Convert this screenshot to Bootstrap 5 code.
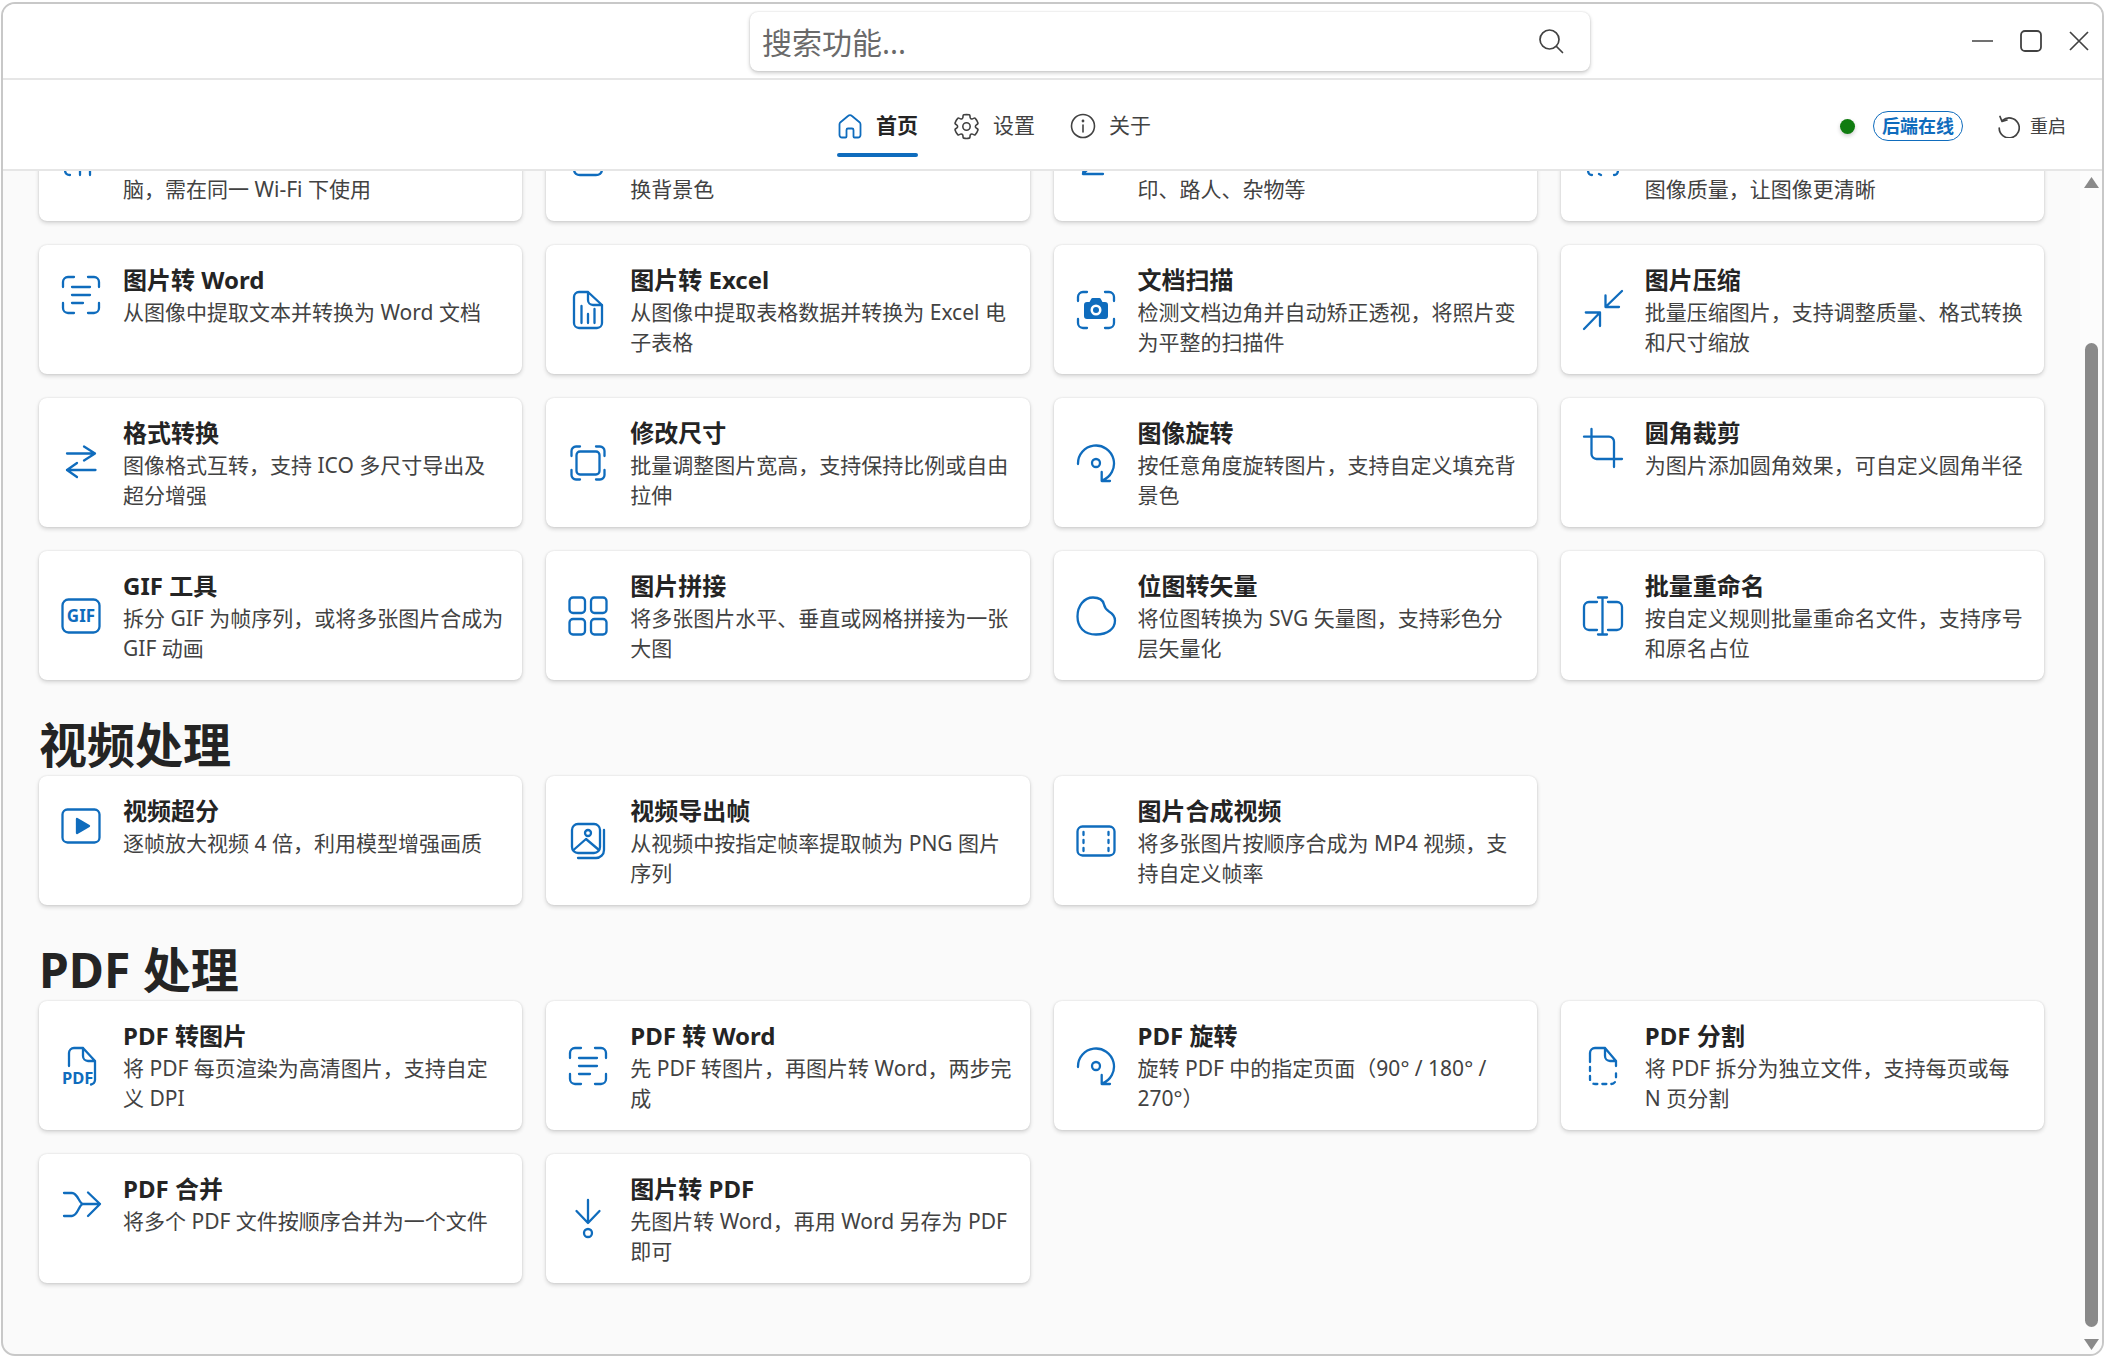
<!DOCTYPE html>
<html lang="zh-CN">
<head>
    <meta charset="UTF-8">
    <meta name="viewport" content="width=device-width, initial-scale=1.0">
    <title>工具箱</title>
    <link rel="stylesheet" href="https://cdn.jsdelivr.net/npm/bootstrap@5.3.0/dist/css/bootstrap.min.css">
    <style>
        html, body {
            height: 100%;
            overflow: hidden;
            background: #fff;
        }
        body {
            font-family: "Noto Sans", "Noto Sans CJK SC", sans-serif;
            color: #242424;
            padding: 2px 2px 1px 1px;
        }
        .app-window {
            height: 100%;
            border: 2px solid #c8c8c8;
            border-radius: 14px;
            overflow: hidden;
            background: #fafafa;
        }
        .title-strip {
            height: 76px;
            flex: none;
            background: #fff;
            border-bottom: 2px solid #e6e6e6;
        }
        .search-box {
            width: 840px;
            height: 59px;
            margin-left: 747px;
            padding: 0 26px 0 12px;
            border-radius: 8px;
            background: #fff;
            box-shadow: 0 2px 4px rgba(0, 0, 0, .2), 0 0 2px rgba(0, 0, 0, .14);
        }
        .search-box input {
            border: 0;
            outline: 0;
            padding: 2px 0 0;
            flex: 1;
            font-size: 30px;
            color: #242424;
            background: transparent;
            font-family: inherit;
        }
        .search-box input::placeholder {
            color: #6a6a6a;
            opacity: 1;
        }
        .win-btns {
            margin-left: auto;
            gap: 26px;
            padding-right: 12px;
            color: #424242;
        }
        .nav-strip {
            height: 91px;
            flex: none;
            padding-top: 3px;
            background: #fff;
            border-bottom: 2px solid #e6e6e6;
        }
        .tab-list {
            margin-left: 834px;
            gap: 35px;
        }
        .tab-item {
            position: relative;
            padding: 0;
            gap: 13px;
            height: 46px;
            font-size: 21px;
            color: #424242;
        }
        .tab-item:hover {
            color: #242424;
        }
        .tab-item.is-on {
            font-weight: 700;
            color: #242424;
        }
        .tab-item.is-on::after {
            content: "";
            position: absolute;
            left: 0;
            right: 0;
            bottom: -8px;
            height: 4px;
            border-radius: 2px;
            background: #0f6cbd;
        }
        .status-group {
            margin-left: auto;
            padding-right: 36px;
        }
        .status-dot {
            width: 15px;
            height: 15px;
            border-radius: 50%;
            background: #107c10;
            box-shadow: 0 2px 4px rgba(0, 0, 0, .2);
            margin-right: 18px;
        }
        .status-pill {
            width: 90px;
            height: 30px;
            border: 1px solid #0f6cbd;
            border-radius: 15px;
            background: #fff;
            color: #0f6cbd;
            font-size: 18px;
            font-weight: 700;
            line-height: 28px;
            padding: 0;
            margin-right: 35px;
        }
        .restart-btn {
            gap: 10px;
            font-size: 18px;
            color: #424242;
        }
        .tool-pane {
            position: relative;
            flex: 1;
            min-height: 0;
            overflow: hidden;
        }
        .tool-track {
            margin-top: -79px;
            padding: 0 58px 0 36px;
        }
        .sec-head {
            margin: 0;
            padding-top: 33px;
            font-size: 48px;
            font-weight: 700;
            line-height: 63px;
            color: #242424;
        }
        .tool-card {
            height: 129px;
            border: 0;
            border-radius: 8px;
            background: #fff;
            box-shadow: 0 2px 4px rgba(0, 0, 0, .16), 0 0 2px rgba(0, 0, 0, .12);
            padding: 18px 17px 0 22px;
        }
        .tool-row {
            gap: 22px;
        }
        .tool-ico {
            flex: none;
            width: 40px;
            height: 40px;
            overflow: visible;
            color: #0f6cbd;
            fill: none;
            stroke: currentColor;
            stroke-width: 2.3;
            stroke-linecap: round;
            stroke-linejoin: round;
        }
        .ico-label {
            fill: currentColor;
            stroke: none;
            font-family: "Noto Sans", sans-serif;
            font-weight: 700;
        }
        .tool-name {
            font-size: 24px;
            font-weight: 700;
            line-height: 34px;
            color: #242424;
        }
        .tool-desc {
            font-size: 21px;
            line-height: 30px;
            color: #424242;
        }
        .tool-desc.tail-only {
            padding-top: 64px;
        }
        .scroll-rail {
            position: absolute;
            top: 0;
            right: 0;
            bottom: 0;
            width: 22px;
            background: #fcfcfc;
            padding: 6px 3px 4px 4px;
            color: #8a8a8a;
        }
        .scroll-thumb {
            width: 13px;
            height: 984px;
            margin: 155px auto 0;
            border-radius: 7px;
            background: #8a8a8a;
        }
    </style>
</head>
<body>
    <svg width="0" height="0" class="position-absolute">
        <defs>
            <symbol id="i-scan" viewBox="0 0 40 40"><path d="M13 2H7a5 5 0 0 0-5 5v5M27 2h6a5 5 0 0 1 5 5v5M13 38H7a5 5 0 0 1-5-5v-5M27 38h6a5 5 0 0 0 5-5v-5M11 12h18M11 20h18M11 28h11"/></symbol>
            <symbol id="i-rotate" viewBox="0 0 40 40"><path d="M2 21A18 18 0 1 1 26 37.5M25.7 29v9H34"/><circle cx="20" cy="20" r="4"/></symbol>
        </defs>
    </svg>

    <div class="app-window d-flex flex-column">
        <div class="title-strip d-flex align-items-center">
            <div class="search-box d-flex align-items-center">
                <input type="text" placeholder="搜索功能...">
                <svg width="26" height="26" viewBox="0 0 26 26" fill="none" stroke="#424242" stroke-width="1.7" stroke-linecap="round"><circle cx="11.5" cy="11.5" r="9.5"/><path d="M18.5 18.5l6 6"/></svg>
            </div>
            <div class="win-btns d-flex align-items-center">
                <svg width="22" height="22" viewBox="0 0 22 22" fill="none" stroke="currentColor" stroke-width="1.7"><path d="M0 11h21"/></svg>
                <svg width="22" height="22" viewBox="0 0 22 22" fill="none" stroke="currentColor" stroke-width="1.8"><rect x="1" y="1" width="20" height="20" rx="4"/></svg>
                <svg width="22" height="22" viewBox="0 0 22 22" fill="none" stroke="currentColor" stroke-width="1.7"><path d="M2 2l18 18M20 2L2 20"/></svg>
            </div>
        </div>

        <div class="nav-strip d-flex align-items-center">
            <ul class="nav tab-list">
                <li class="nav-item">
                    <a class="nav-link tab-item is-on d-flex align-items-center" href="#">
                        <svg width="26" height="25" viewBox="0 0 25 25" fill="none" stroke="#0f6cbd" stroke-width="1.8" stroke-linejoin="round"><path d="M10.5 2l-7.5 6.2a3 3 0 0 0-1 2.3V21a2.500 2.500 0 0 0 2.500 2.500H8a1 1 0 0 0 1-1V16a1.500 1.500 0 0 1 1.500-1.500h4A1.500 1.500 0 0 1 16 16v6.500a1 1 0 0 0 1 1h3.500A2.500 2.500 0 0 0 23 21V10.500a3 3 0 0 0-1-2.300L14.500 2a3 3 0 0 0-4 0z"/></svg>
                        首页
                    </a>
                </li>
                <li class="nav-item">
                    <a class="nav-link tab-item d-flex align-items-center" href="#">
                        <svg width="27" height="27" viewBox="1 1 22 22" fill="none" stroke="#424242" stroke-width="1.300" stroke-linejoin="round"><path d="M12.012 2.250c.734.008 1.465.093 2.182.253a.75.75 0 0 1 .582.649l.17 1.527a1.384 1.384 0 0 0 1.927 1.116l1.401-.615a.75.75 0 0 1 .85.174 9.792 9.792 0 0 1 2.204 3.792.75.75 0 0 1-.271.825l-1.242.916a1.381 1.381 0 0 0 0 2.226l1.243.915a.75.75 0 0 1 .272.826 9.797 9.797 0 0 1-2.204 3.792.75.75 0 0 1-.848.175l-1.407-.617a1.380 1.380 0 0 0-1.926 1.114l-.169 1.526a.75.75 0 0 1-.572.647 9.518 9.518 0 0 1-4.406 0 .75.75 0 0 1-.572-.647l-.168-1.524a1.382 1.382 0 0 0-1.926-1.110l-1.406.616a.75.75 0 0 1-.849-.175 9.798 9.798 0 0 1-2.204-3.796.75.75 0 0 1 .272-.826l1.243-.916a1.380 1.380 0 0 0 0-2.226l-1.243-.914a.75.75 0 0 1-.271-.826 9.793 9.793 0 0 1 2.204-3.792.75.75 0 0 1 .85-.174l1.400.615a1.387 1.387 0 0 0 1.930-1.118l.17-1.526a.75.75 0 0 1 .583-.650c.717-.159 1.450-.243 2.201-.252z"/><circle cx="12" cy="12" r="3"/></svg>
                        设置
                    </a>
                </li>
                <li class="nav-item">
                    <a class="nav-link tab-item d-flex align-items-center" href="#">
                        <svg width="26" height="26" viewBox="0 0 26 26" fill="none" stroke="#424242" stroke-width="1.6" stroke-linecap="round"><circle cx="13" cy="13" r="11.500"/><path d="M13 12v7"/><circle cx="13" cy="8" r=".6"/></svg>
                        关于
                    </a>
                </li>
            </ul>
            <div class="status-group d-flex align-items-center">
                <span class="status-dot"></span>
                <span class="status-pill text-center">后端在线</span>
                <a class="restart-btn d-flex align-items-center text-decoration-none" href="#">
                    <svg width="22" height="23" viewBox="0 0 22 23" fill="none" stroke="#424242" stroke-width="1.700" stroke-linecap="round" stroke-linejoin="round"><path d="M4.500 5.500A10 10 0 1 1 1.200 13M2 1.500l2 5 5-1.500"/></svg>
                    重启
                </a>
            </div>
        </div>

        <div class="tool-pane">
            <div class="tool-track d-flex flex-column">
                <div class="row row-cols-4 g-4">
                    <div class="col"><div class="card tool-card"><div class="d-flex align-items-center tool-row">
                        <svg class="tool-ico" viewBox="0 0 40 40"><path d="M4 33c0 3 2 5 5 5M19 34v4M29 34v4"/></svg>
                        <div class="tool-desc tail-only">脑，需在同一 Wi-Fi 下使用</div>
                    </div></div></div>
                    <div class="col"><div class="card tool-card"><div class="d-flex align-items-center tool-row">
                        <svg class="tool-ico" viewBox="0 0 40 40"><path d="M6 32c0 4 2 6 6 6h16c4 0 6-2 6-6"/></svg>
                        <div class="tool-desc tail-only">换背景色</div>
                    </div></div></div>
                    <div class="col"><div class="card tool-card"><div class="d-flex align-items-center tool-row">
                        <svg class="tool-ico" viewBox="0 0 40 40"><path d="M8 30l-1 7h20M12 32l-5 5"/></svg>
                        <div class="tool-desc tail-only">印、路人、杂物等</div>
                    </div></div></div>
                    <div class="col"><div class="card tool-card"><div class="d-flex align-items-center tool-row">
                        <svg class="tool-ico" viewBox="0 0 40 40"><path d="M5 33c0 3 1 5 4 5M35 33c0 3-1 5-4 5M16 37l2 1"/></svg>
                        <div class="tool-desc tail-only">图像质量，让图像更清晰</div>
                    </div></div></div>

                    <div class="col"><div class="card tool-card"><div class="d-flex align-items-center tool-row">
                        <svg class="tool-ico"><use href="#i-scan"/></svg>
                        <div><div class="tool-name">图片转 Word</div><div class="tool-desc">从图像中提取文本并转换为 Word 文档</div></div>
                    </div></div></div>
                    <div class="col"><div class="card tool-card"><div class="d-flex align-items-center tool-row">
                        <svg class="tool-ico" viewBox="0 0 40 40"><path d="M20 2h-9a5 5 0 0 0-5 5v26a5 5 0 0 0 5 5h18a5 5 0 0 0 5-5V15L20 2zM20 2v8a5 5 0 0 0 5 5h9M13.500 16v17M20 24v9M26.500 19v14"/></svg>
                        <div><div class="tool-name">图片转 Excel</div><div class="tool-desc">从图像中提取表格数据并转换为 Excel 电子表格</div></div>
                    </div></div></div>
                    <div class="col"><div class="card tool-card"><div class="d-flex align-items-center tool-row">
                        <svg class="tool-ico" viewBox="0 0 40 40"><path d="M11 2H7a5 5 0 0 0-5 5v4M29 2h4a5 5 0 0 1 5 5v4M11 38H7a5 5 0 0 1-5-5v-4M29 38h4a5 5 0 0 0 5-5v-4"/><path fill="currentColor" stroke="none" d="M13.500 12l1.800-3.200a1.500 1.500 0 0 1 1.300-.8h6.800a1.500 1.500 0 0 1 1.300.8l1.800 3.200H29a3 3 0 0 1 3 3v11a3 3 0 0 1-3 3H11a3 3 0 0 1-3-3V15a3 3 0 0 1 3-3z"/><circle cx="20" cy="20" r="5.500" fill="#fff" stroke="none"/><circle cx="20" cy="20" r="3" fill="currentColor" stroke="none"/></svg>
                        <div><div class="tool-name">文档扫描</div><div class="tool-desc">检测文档边角并自动矫正透视，将照片变为平整的扫描件</div></div>
                    </div></div></div>
                    <div class="col"><div class="card tool-card"><div class="d-flex align-items-center tool-row">
                        <svg class="tool-ico" viewBox="0 0 40 40"><path d="M39 1L22.500 17M22.500 5.500V17H36M1 39l16-16.500M2.800 22.500H17V36"/></svg>
                        <div><div class="tool-name">图片压缩</div><div class="tool-desc">批量压缩图片，支持调整质量、格式转换和尺寸缩放</div></div>
                    </div></div></div>

                    <div class="col"><div class="card tool-card"><div class="d-flex align-items-center tool-row">
                        <svg class="tool-ico" viewBox="0 0 40 40"><path d="M6 10.500h28M23 3.500l11 7-11 7M34.500 27H6M16 20L6 27l10 7"/></svg>
                        <div><div class="tool-name">格式转换</div><div class="tool-desc">图像格式互转，支持 ICO 多尺寸导出及超分增强</div></div>
                    </div></div></div>
                    <div class="col"><div class="card tool-card"><div class="d-flex align-items-center tool-row">
                        <svg class="tool-ico" viewBox="0 0 40 40"><rect x="8.500" y="8.500" width="23" height="23" rx="3.500"/><path d="M3.500 13V8A4.500 4.500 0 0 1 8 3.500h4M36.500 13V8A4.500 4.500 0 0 0 32 3.500h-4M3.500 27v5A4.500 4.500 0 0 0 8 36.500h4M36.500 27v5a4.500 4.500 0 0 1-4.500 4.500h-4"/></svg>
                        <div><div class="tool-name">修改尺寸</div><div class="tool-desc">批量调整图片宽高，支持保持比例或自由拉伸</div></div>
                    </div></div></div>
                    <div class="col"><div class="card tool-card"><div class="d-flex align-items-center tool-row">
                        <svg class="tool-ico"><use href="#i-rotate"/></svg>
                        <div><div class="tool-name">图像旋转</div><div class="tool-desc">按任意角度旋转图片，支持自定义填充背景色</div></div>
                    </div></div></div>
                    <div class="col"><div class="card tool-card"><div class="d-flex align-items-center tool-row">
                        <svg class="tool-ico" viewBox="0 0 40 40"><path d="M8.500 1v25a5 5 0 0 0 5 5H39M1 8.700h25a5 5 0 0 1 5 5V39"/></svg>
                        <div><div class="tool-name">圆角裁剪</div><div class="tool-desc">为图片添加圆角效果，可自定义圆角半径</div></div>
                    </div></div></div>

                    <div class="col"><div class="card tool-card"><div class="d-flex align-items-center tool-row">
                        <svg class="tool-ico" viewBox="0 0 40 40"><rect x="1.500" y="3.500" width="37" height="33" rx="6"/><text class="ico-label" x="20" y="26" font-size="17" text-anchor="middle">GIF</text></svg>
                        <div><div class="tool-name">GIF 工具</div><div class="tool-desc">拆分 GIF 为帧序列，或将多张图片合成为 GIF 动画</div></div>
                    </div></div></div>
                    <div class="col"><div class="card tool-card"><div class="d-flex align-items-center tool-row">
                        <svg class="tool-ico" viewBox="0 0 40 40"><rect x="1.500" y="1.500" width="15.500" height="15.500" rx="3.500"/><rect x="23" y="1.500" width="15.500" height="15.500" rx="3.500"/><rect x="1.500" y="23" width="15.500" height="15.500" rx="3.500"/><rect x="23" y="23" width="15.500" height="15.500" rx="3.500"/></svg>
                        <div><div class="tool-name">图片拼接</div><div class="tool-desc">将多张图片水平、垂直或网格拼接为一张大图</div></div>
                    </div></div></div>
                    <div class="col"><div class="card tool-card"><div class="d-flex align-items-center tool-row">
                        <svg class="tool-ico" viewBox="0 0 40 40"><path d="M1.500 20.500C1.500 10 8 1.500 17 1.500c6 0 10 2.500 11 7 .6 3 2 5 5 7 4 2.500 6 5 6 9 0 8-7 14-19 14S1.500 31 1.500 20.500z"/></svg>
                        <div><div class="tool-name">位图转矢量</div><div class="tool-desc">将位图转换为 SVG 矢量图，支持彩色分层矢量化</div></div>
                    </div></div></div>
                    <div class="col"><div class="card tool-card"><div class="d-flex align-items-center tool-row">
                        <svg class="tool-ico" viewBox="0 0 40 40"><path d="M19.500 1.500v37M15 1.500h9M15 38.500h9M14 6H6a5 5 0 0 0-5 5v18a5 5 0 0 0 5 5h8M25 6h9a5 5 0 0 1 5 5v18a5 5 0 0 1-5 5h-9"/></svg>
                        <div><div class="tool-name">批量重命名</div><div class="tool-desc">按自定义规则批量重命名文件，支持序号和原名占位</div></div>
                    </div></div></div>
                </div>

                <h2 class="sec-head">视频处理</h2>
                <div class="row row-cols-4 g-4">
                    <div class="col"><div class="card tool-card"><div class="d-flex align-items-center tool-row">
                        <svg class="tool-ico" viewBox="0 0 40 40"><rect x="1.500" y="3.500" width="37" height="33" rx="5"/><path fill="currentColor" d="M16 13l12 7-12 7z"/></svg>
                        <div><div class="tool-name">视频超分</div><div class="tool-desc">逐帧放大视频 4 倍，利用模型增强画质</div></div>
                    </div></div></div>
                    <div class="col"><div class="card tool-card"><div class="d-flex align-items-center tool-row">
                        <svg class="tool-ico" viewBox="0 0 40 40"><rect x="4" y="3" width="28" height="29" rx="6"/><circle cx="20" cy="12" r="3"/><path d="M5.500 29L18 18l13 11M36 9v20a8 8 0 0 1-8 8H10"/></svg>
                        <div><div class="tool-name">视频导出帧</div><div class="tool-desc">从视频中按指定帧率提取帧为 PNG 图片序列</div></div>
                    </div></div></div>
                    <div class="col"><div class="card tool-card"><div class="d-flex align-items-center tool-row">
                        <svg class="tool-ico" viewBox="0 0 40 40"><rect x="1.500" y="5.500" width="37" height="29" rx="5"/><path stroke-dasharray="3 5" d="M7.500 11v20M32.500 11v20"/></svg>
                        <div><div class="tool-name">图片合成视频</div><div class="tool-desc">将多张图片按顺序合成为 MP4 视频，支持自定义帧率</div></div>
                    </div></div></div>
                </div>

                <h2 class="sec-head">PDF 处理</h2>
                <div class="row row-cols-4 g-4">
                    <div class="col"><div class="card tool-card"><div class="d-flex align-items-center tool-row">
                        <svg class="tool-ico" viewBox="0 0 40 40"><path d="M8 20V7a5 5 0 0 1 5-5h9l12 13v19a5 5 0 0 1-4 4.500M22 2v8a5 5 0 0 0 5 5h7"/><text class="ico-label" x="1" y="38" font-size="16.500">PDF</text></svg>
                        <div><div class="tool-name">PDF 转图片</div><div class="tool-desc">将 PDF 每页渲染为高清图片，支持自定义 DPI</div></div>
                    </div></div></div>
                    <div class="col"><div class="card tool-card"><div class="d-flex align-items-center tool-row">
                        <svg class="tool-ico"><use href="#i-scan"/></svg>
                        <div><div class="tool-name">PDF 转 Word</div><div class="tool-desc">先 PDF 转图片，再图片转 Word，两步完成</div></div>
                    </div></div></div>
                    <div class="col"><div class="card tool-card"><div class="d-flex align-items-center tool-row">
                        <svg class="tool-ico"><use href="#i-rotate"/></svg>
                        <div><div class="tool-name">PDF 旋转</div><div class="tool-desc">旋转 PDF 中的指定页面（90° / 180° / 270°）</div></div>
                    </div></div></div>
                    <div class="col"><div class="card tool-card"><div class="d-flex align-items-center tool-row">
                        <svg class="tool-ico" viewBox="0 0 40 40"><path d="M7 16V7a5 5 0 0 1 5-5h10l11 13v5M22 2v8a5 5 0 0 0 5 5h6"/><path stroke-dasharray="4 5" d="M7 21v12a5 5 0 0 0 5 5h16a5 5 0 0 0 5-5v-9"/></svg>
                        <div><div class="tool-name">PDF 分割</div><div class="tool-desc">将 PDF 拆分为独立文件，支持每页或每 N 页分割</div></div>
                    </div></div></div>
                    <div class="col"><div class="card tool-card"><div class="d-flex align-items-center tool-row">
                        <svg class="tool-ico" viewBox="0 0 40 40"><path d="M3 9h8c6 0 7 11 11 11-4 0-5 12-11 12H3M22 20h17M27 8.500L39 20 27 32"/></svg>
                        <div><div class="tool-name">PDF 合并</div><div class="tool-desc">将多个 PDF 文件按顺序合并为一个文件</div></div>
                    </div></div></div>
                    <div class="col"><div class="card tool-card"><div class="d-flex align-items-center tool-row">
                        <svg class="tool-ico" viewBox="0 0 40 40"><path d="M20 1v23M8.500 12L20 24l11.500-12"/><circle cx="20" cy="34" r="4"/></svg>
                        <div><div class="tool-name">图片转 PDF</div><div class="tool-desc">先图片转 Word，再用 Word 另存为 PDF 即可</div></div>
                    </div></div></div>
                </div>
            </div>

            <div class="scroll-rail d-flex flex-column align-items-center">
                <svg width="15" height="11" viewBox="0 0 15 11" class="flex-shrink-0"><path fill="currentColor" d="M7.500 0l7.500 11H0z"/></svg>
                <div class="scroll-thumb"></div>
                <svg width="15" height="11" viewBox="0 0 15 11" class="mt-auto"><path fill="currentColor" d="M7.500 11L0 0h15z"/></svg>
            </div>
        </div>
    </div>
    <script src="https://cdn.jsdelivr.net/npm/bootstrap@5.3.0/dist/js/bootstrap.bundle.min.js"></script>
</body>
</html>
